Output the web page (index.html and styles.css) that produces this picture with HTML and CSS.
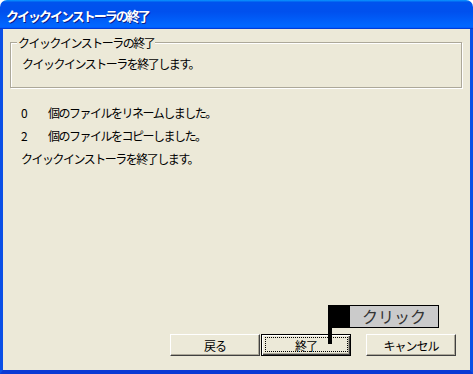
FILE: index.html
```html
<!DOCTYPE html>
<html lang="ja">
<head>
    <meta charset="UTF-8">
    <title>クイックインストーラの終了</title>
    <link rel="stylesheet" href="styles.css">
</head>
<body>
    <div class="window">
        <div class="titlebar">
            <span class="title">クイックインストーラの終了</span>
        </div>

        <div class="content">
            <fieldset class="group">
                <legend>クイックインストーラの終了</legend>
                <p>クイックインストーラを終了します。</p>
            </fieldset>

            <div class="log">
                <p><span class="num">0</span>個のファイルをリネームしました。</p>
                <p><span class="num">2</span>個のファイルをコピーしました。</p>
                <p class="last">クイックインストーラを終了します。</p>
            </div>

            <div class="buttons">
                <button class="btn">戻る</button>
                <button class="btn default">終了</button>
                <button class="btn cancel">キャンセル</button>
            </div>
        </div>

        <!-- 説明用の吹き出し -->
        <div class="callout">
            <span class="mark"></span>
            <span class="label">クリック</span>
        </div>
    </div>
</body>
</html>
```

FILE: styles.css
```css
body {
    margin: 0;
    background: #ffffff;
    font-family: "Noto Sans CJK JP", sans-serif;
    font-size: 12px;
    color: #000000;
}
.window {
    position: relative;
    width: 473px;
    height: 374px;
    border-radius: 7px 7px 0 0;
    overflow: hidden;
}
.titlebar {
    height: 29px;
    box-sizing: border-box;
    padding: 3px 0 0 6px;
    background: linear-gradient(to bottom, #0997ff 0%, #0053ee 8%, #0050ee 40%, #0066ff 88%, #0066ff 93%, #005bff 95%, #003dd7 96%, #003dd7 100%);
}
.title {
    color: #ffffff;
    font-weight: bold;
    font-size: 13px;
    line-height: 26px;
    letter-spacing: -2px;
    text-shadow: 1px 1px #0a1e8a;
}
.content {
    display: flex;
    flex-direction: column;
    height: 345px;
    box-sizing: border-box;
    border-style: solid;
    border-width: 0 3px 4px 3px;
    border-color: #0855dd #0a4fe6 #0a3ad4 #0a4fe6;
    background: #ece9d8;
    letter-spacing: -1.5px;
}
.content p {
    margin: 0;
    line-height: 14px;
}

.group {
    margin: 7px 8px 0 7px;
    padding: 8px 11px 16px;
    border: 1px solid #aca899;
    box-shadow: inset 1px 1px #ffffff, 1px 1px #ffffff;
}
.group legend {
    margin-left: -5px;
    padding: 0 1px;
    line-height: 13px;
    background: #ece9d8;
}

.log {
    padding: 18px 0 0 18px;
}
.log p {
    margin-bottom: 9px;
}
.log p.last {
    margin-top: 2px;
}
.num {
    display: inline-block;
    width: 27px;
}

.buttons {
    display: flex;
    justify-content: flex-end;
    margin-top: auto;
    margin-bottom: 14px;
    padding-right: 14px;
}
.btn {
    position: relative;
    width: 90px;
    height: 22px;
    margin-left: 1px;
    padding: 0;
    font-family: inherit;
    font-size: 12px;
    letter-spacing: -1px;
    color: #000000;
    background: #ece9d8;
    border: 1px solid;
    border-color: #ffffff #404040 #404040 #ffffff;
    box-shadow: inset -1px -1px #aca899;
    border-radius: 0;
}
.btn.default {
    border-color: #000000;
    box-shadow: inset 1px 1px #ffffff, inset -1px -1px #404040, inset -2px -2px #aca899;
}
.btn.default::after {
    content: "";
    position: absolute;
    top: 2px;
    left: 3px;
    right: 2px;
    bottom: 3px;
    border: 1px dotted #000000;
}
.btn.cancel {
    margin-left: 15px;
}

.callout {
    position: absolute;
    left: 328px;
    top: 305px;
    display: flex;
}
.mark {
    position: relative;
    width: 22px;
    height: 23px;
    background: #000000;
}
.mark::after {
    content: "";
    position: absolute;
    left: 0;
    top: 23px;
    width: 4px;
    height: 16px;
    background: #000000;
}
.label {
    width: 88px;
    height: 21px;
    border: 1px solid #000000;
    border-left: none;
    background: #cbcbcb;
    color: #333333;
    font-size: 16px;
    line-height: 21px;
    text-align: center;
}
```
